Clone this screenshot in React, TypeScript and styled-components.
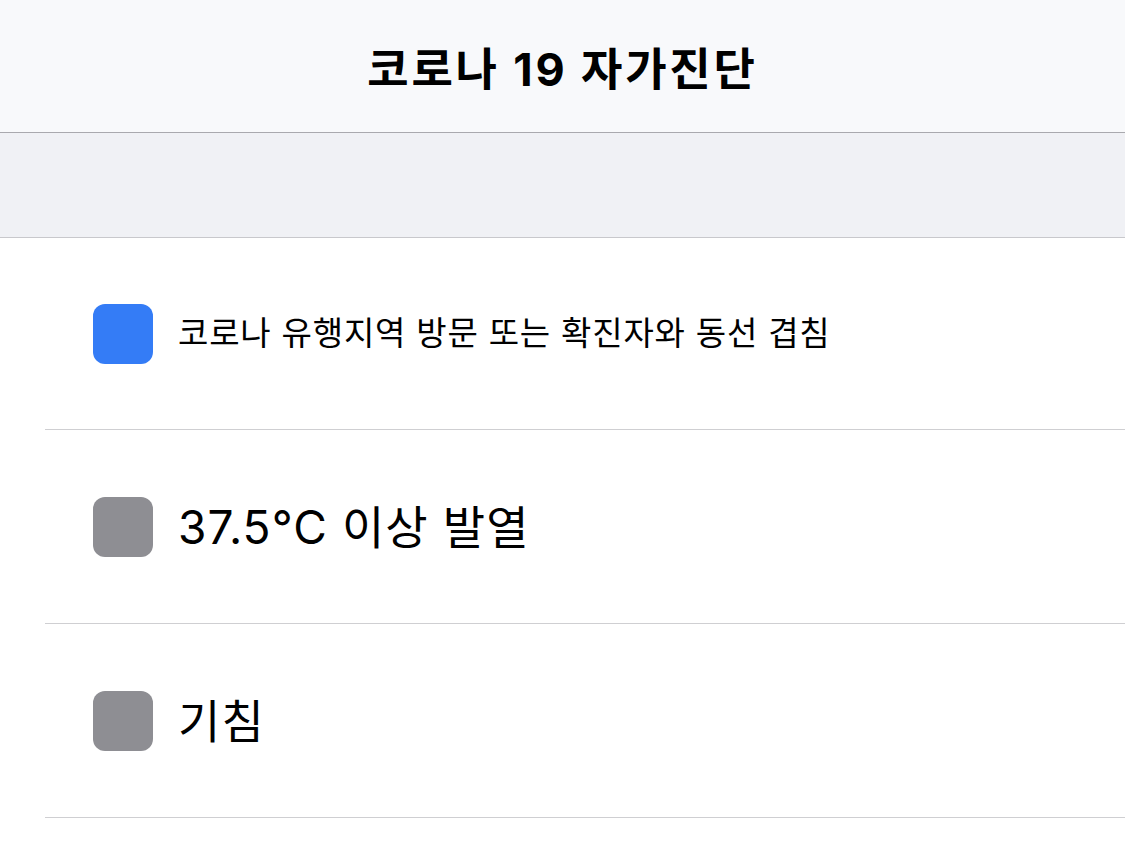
import React from "react";
import styled, { createGlobalStyle } from "styled-components";

const Global = createGlobalStyle`
  html, body { margin: 0; padding: 0; background: #ffffff; }
  body { font-family: Inter, "Noto Sans CJK KR", "Noto Sans", sans-serif; color: #000; }
`;

const Page = styled.div`
  width: 1125px;
  min-height: 851px;
  display: flex;
  flex-direction: column;
  background: #ffffff;
`;

const Header = styled.header`
  height: 132px;
  background: #f8f9fb;
  border-bottom: 1px solid #a9a9ae;
  display: flex;
  align-items: center;
  justify-content: center;
`;

const Title = styled.h1`
  margin: 0;
  font-size: 45px;
  font-weight: 700;
  letter-spacing: 2.8px;
`;

const Band = styled.div`
  height: 104px;
  background: #f0f1f5;
  border-bottom: 1px solid #c8c8cc;
`;

const List = styled.ul`
  list-style: none;
  margin: 0;
  padding: 0 0 0 45px;
`;

const Row = styled.li<{ $h: number }>`
  height: ${(p) => p.$h}px;
  border-bottom: 1px solid #cfcfd2;
  display: flex;
  align-items: center;
  gap: 25px;
  padding-left: 48px;
`;

const Box = styled.span<{ $checked: boolean }>`
  width: 60px;
  height: 60px;
  border-radius: 12px;
  flex-shrink: 0;
  background: ${(p) => (p.$checked ? "#347cf6" : "#8e8e93")};
`;

const Label = styled.span<{ $size: number; $spacing: number }>`
  font-size: ${(p) => p.$size}px;
  letter-spacing: ${(p) => p.$spacing}px;
  line-height: 1;
  font-weight: 400;
`;

const items = [
  { text: "코로나 유행지역 방문 또는 확진자와 동선 겹침", checked: true, size: 33, spacing: 0.8, h: 191 },
  { text: "37.5°C 이상 발열", checked: false, size: 46, spacing: 1.1, h: 193 },
  { text: "기침", checked: false, size: 46, spacing: 1.1, h: 193 },
];

export default function App() {
  return (
    <Page>
      <Global />
      <Header>
        <Title>코로나 19 자가진단</Title>
      </Header>
      <Band />
      <List>
        {items.map((it) => (
          <Row key={it.text} $h={it.h}>
            <Box $checked={it.checked} />
            <Label $size={it.size} $spacing={it.spacing}>
              {it.text}
            </Label>
          </Row>
        ))}
      </List>
    </Page>
  );
}
